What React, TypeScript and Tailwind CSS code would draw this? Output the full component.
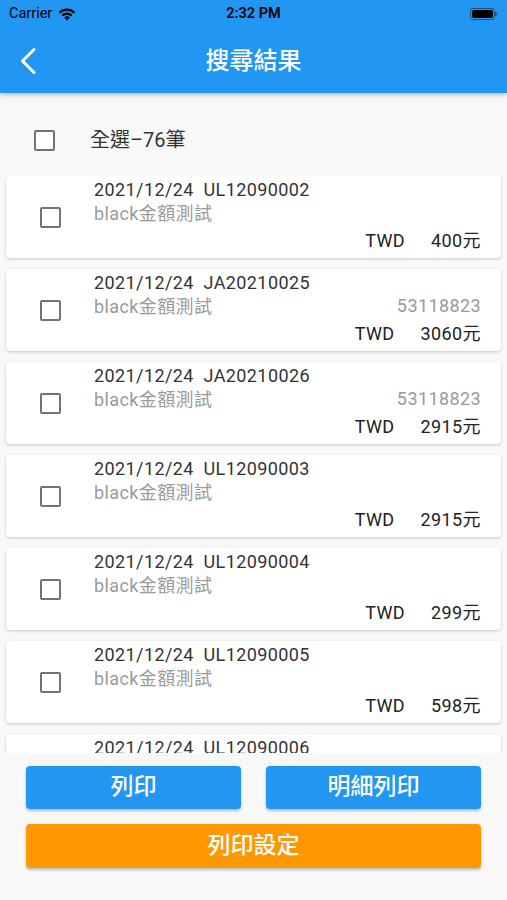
interface Record {
  date: string;
  no: string;
  name: string;
  taxId?: string;
  amount: string;
}

const records: Record[] = [
  { date: '2021/12/24', no: 'UL12090002', name: 'black金額測試', amount: '400' },
  { date: '2021/12/24', no: 'JA20210025', name: 'black金額測試', taxId: '53118823', amount: '3060' },
  { date: '2021/12/24', no: 'JA20210026', name: 'black金額測試', taxId: '53118823', amount: '2915' },
  { date: '2021/12/24', no: 'UL12090003', name: 'black金額測試', amount: '2915' },
  { date: '2021/12/24', no: 'UL12090004', name: 'black金額測試', amount: '299' },
  { date: '2021/12/24', no: 'UL12090005', name: 'black金額測試', amount: '598' },
  { date: '2021/12/24', no: 'UL12090006', name: 'black金額測試', amount: '1200' },
];

const font = { fontFamily: 'Roboto, "Noto Sans CJK TC", sans-serif' };

function Box() {
  return <div className="w-[21px] h-[21px] border-2 border-[#737373] rounded-[2px] bg-white" />;
}

function StatusBar() {
  return (
    <div className="h-[28px] flex items-center justify-between px-[9px] text-[14.5px] text-black relative">
      <div className="flex items-center gap-[6px]">
        <span>Carrier</span>
        <svg width="18" height="13" viewBox="0 0 18 13">
          <path d="M9 12.5 L6.3 9.6 A4 4 0 0 1 11.7 9.6 Z" fill="#000" />
          <path d="M3.6 6.8 A7.6 7.6 0 0 1 14.4 6.8 L12.9 8.4 A5.4 5.4 0 0 0 5.1 8.4 Z" fill="#000" />
          <path d="M0.8 4 A11.6 11.6 0 0 1 17.2 4 L15.7 5.6 A9.4 9.4 0 0 0 2.3 5.6 Z" fill="#000" />
        </svg>
      </div>
      <span className="absolute left-1/2 -translate-x-1/2 font-semibold">2:32 PM</span>
      <div className="flex items-center mr-[1px]">
        <div className="w-[25px] h-[12px] rounded-[3px] border border-[#1a4f80] p-[1px]">
          <div className="w-full h-full rounded-[2px] bg-black" />
        </div>
        <div className="w-[2px] h-[4px] bg-[#1a4f80] rounded-r-sm" />
      </div>
    </div>
  );
}

function Card({ r }: { r: Record }) {
  return (
    <div className="bg-white rounded-[4px] shadow-[0_1px_3px_rgba(0,0,0,0.2)] h-[82px] flex shrink-0">
      <div className="w-[88px] flex items-center justify-center">
        <Box />
      </div>
      <div className="flex-1 pt-[2px] text-[18px] leading-[24px] tracking-[0.4px]">
        <div className="text-[#333]">{r.date}&nbsp;&nbsp;{r.no}</div>
        <div className="text-[#9a9a9a]">{r.name}</div>
      </div>
      <div className="flex flex-col justify-end items-end pr-[20px] pb-[5px] text-[18px] leading-[24px] tracking-[0.4px]">
        {r.taxId && <div className="text-[#9a9a9a] mb-[4px]">{r.taxId}</div>}
        <div className="flex gap-[26px] text-[#222]">
          <span>TWD</span>
          <span>{r.amount}元</span>
        </div>
      </div>
    </div>
  );
}

export default function App() {
  return (
    <div className="w-[507px] h-[900px] bg-[#f8f8f8] flex flex-col overflow-hidden" style={font}>
      <div className="bg-[#2196f3] shadow-[0_2px_4px_rgba(0,0,0,0.25)] relative z-10 shrink-0">
        <StatusBar />
        <div className="h-[65px] flex items-center relative">
          <svg width="18" height="28" viewBox="0 0 18 28" className="ml-[19px]">
            <polyline points="15,2.5 3.5,14 15,25.5" fill="none" stroke="#fff" strokeWidth="3" strokeLinecap="round" strokeLinejoin="round" />
          </svg>
          <span className="absolute left-1/2 -translate-x-1/2 text-white text-[24px] font-medium">搜尋結果</span>
        </div>
      </div>

      <div className="flex items-center h-[83px] shrink-0 pt-[11px]">
        <div className="w-[90px] flex justify-center pr-[1px]">
          <Box />
        </div>
        <span className="text-[20px] text-[#333]">全選–76筆</span>
      </div>

      <div className="h-[577px] overflow-hidden flex flex-col gap-[11px] px-[6px] shrink-0">
        {records.map((r) => (
          <Card key={r.no} r={r} />
        ))}
      </div>

      <div className="flex flex-col gap-[15px] px-[26px] pt-[13px]">
        <div className="flex gap-[25px]">
          <button className="flex-1 h-[43px] bg-[#2196f3] text-white text-[23px] font-medium rounded-[4px] shadow-[0_2px_3px_rgba(0,0,0,0.25)]">
            列印
          </button>
          <button className="flex-1 h-[43px] bg-[#2196f3] text-white text-[23px] font-medium rounded-[4px] shadow-[0_2px_3px_rgba(0,0,0,0.25)]">
            明細列印
          </button>
        </div>
        <button className="h-[44px] bg-[#ff9800] text-white text-[23px] font-medium rounded-[4px] shadow-[0_2px_3px_rgba(0,0,0,0.25)]">
          列印設定
        </button>
      </div>
    </div>
  );
}
